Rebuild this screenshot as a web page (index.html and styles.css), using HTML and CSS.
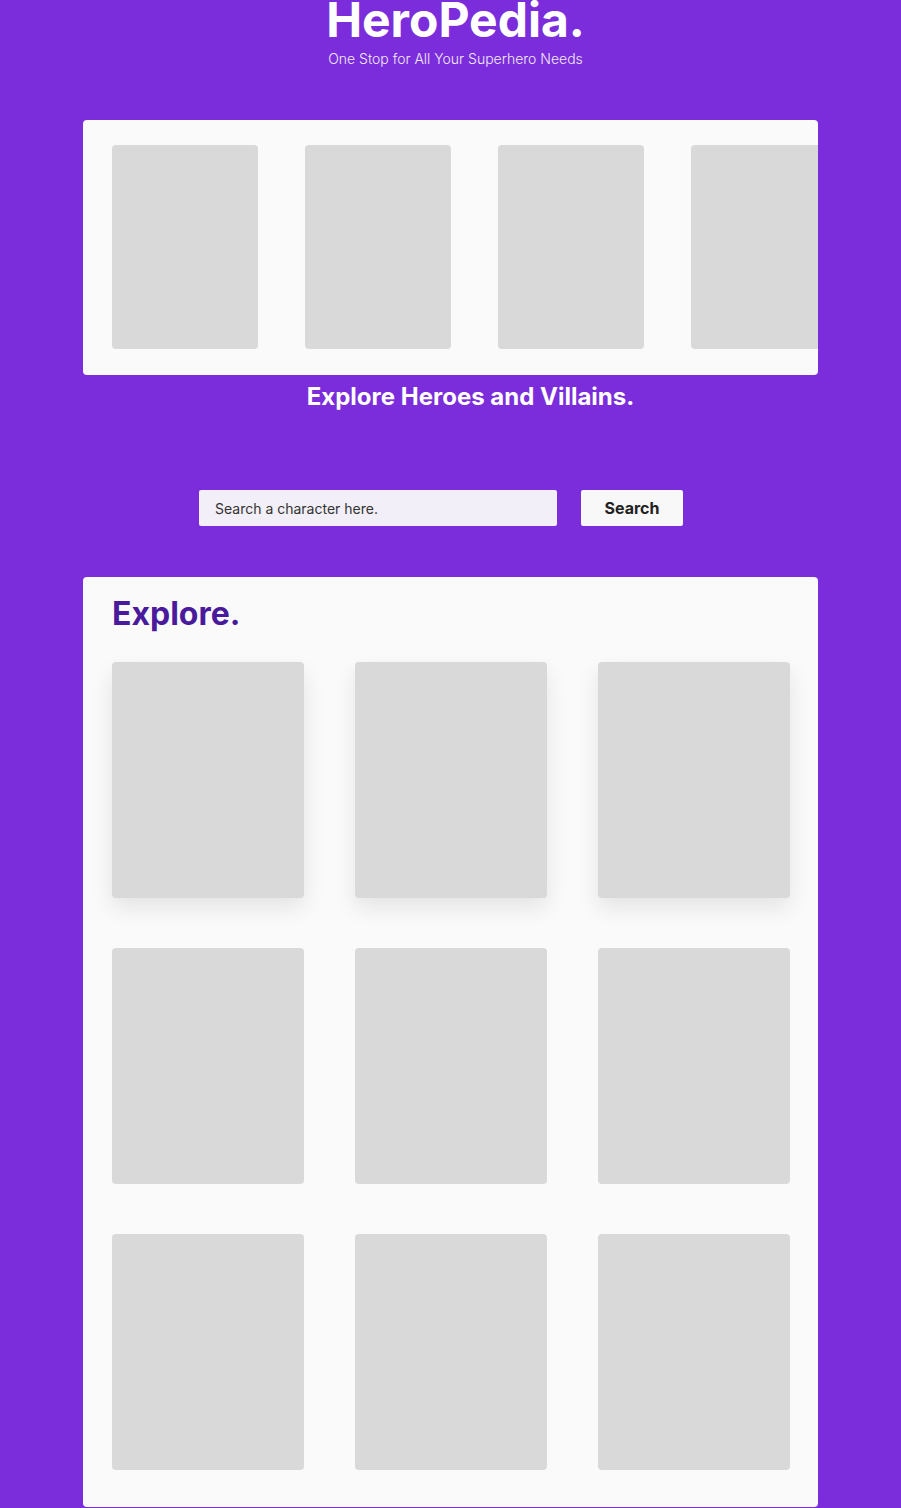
FILE: index.html
```html
<!DOCTYPE html>
<html lang="en">

<head>
    <meta charset="UTF-8">
    <meta name="viewport" content="width=device-width, initial-scale=1.0">
    <title>HeroPedia</title>
    <link rel="stylesheet" href="styles.css">
</head>

<body>
    <header class="header">
        <h1 class="logo">HeroPedia.</h1>
        <p class="tagline">One Stop for All Your Superhero Needs</p>
    </header>

    <section class="carousel">
        <div class="slide"></div>
        <div class="slide"></div>
        <div class="slide"></div>
        <div class="slide"></div>
    </section>
    <h2 class="subtitle">Explore Heroes and Villains.</h2>

    <div class="searchBar">
        <input type="text" id="searchInput" placeholder="Search a character here.">
        <button type="button">Search</button>
    </div>

    <section class="explore">
        <h2>Explore.</h2>
        <div class="grid">
            <div class="card raised"></div>
            <div class="card raised"></div>
            <div class="card raised"></div>
            <div class="card"></div>
            <div class="card"></div>
            <div class="card"></div>
            <div class="card"></div>
            <div class="card"></div>
            <div class="card"></div>
        </div>
    </section>
</body>

</html>
```

FILE: styles.css
```css
* {
    margin: 0;
    padding: 0;
    box-sizing: border-box;
    font-family: Inter, "Noto Sans", sans-serif;
}

body {
    background: #7b2ddb;
    color: #fff;
}

.header {
    text-align: center;
    padding-left: 10px;
}

.logo {
    font-size: 48px;
    font-weight: 700;
    line-height: 40px;
}

.tagline {
    font-size: 14px;
    font-weight: 300;
    line-height: 20px;
    margin-top: 9px;
    opacity: 0.9;
}

.carousel {
    width: 735px;
    height: 255px;
    margin: 51px 0 0 83px;
    padding: 25px 0 0 29px;
    background: #fafafa;
    border-radius: 4px;
    display: flex;
    gap: 47px;
    overflow: hidden;
}

.slide {
    flex: 0 0 146px;
    height: 204px;
    background: #d9d9d9;
    border-radius: 4px;
}

.subtitle {
    text-align: center;
    padding-left: 40px;
    font-size: 24px;
    font-weight: 700;
    line-height: 30px;
    margin-top: 7px;
}

.searchBar {
    display: flex;
    gap: 24px;
    margin: 78px 0 0 199px;
}

.searchBar input {
    width: 358px;
    height: 36px;
    border: none;
    border-radius: 2px;
    background: #f2eff8;
    padding: 0 16px;
    font-size: 14px;
    color: #333;
}

.searchBar input::placeholder {
    color: #333;
}

.searchBar button {
    width: 102px;
    height: 36px;
    border: none;
    border-radius: 2px;
    background: #f8f8f8;
    color: #222;
    font-size: 16px;
    font-weight: 700;
}

.explore {
    width: 735px;
    margin: 51px 0 0 83px;
    padding: 20px 28px 37px 29px;
    background: #fafafa;
    border-radius: 4px;
}

.explore h2 {
    color: #4a1a9c;
    font-size: 32px;
    font-weight: 700;
    line-height: 34px;
}

.grid {
    margin-top: 31px;
    display: grid;
    grid-template-columns: repeat(3, 192px);
    column-gap: 51px;
    row-gap: 50px;
}

.card {
    height: 236px;
    background: #d9d9d9;
    border-radius: 4px;
}

.card.raised {
    box-shadow: 0 10px 22px rgba(0, 0, 0, 0.09);
}
```
